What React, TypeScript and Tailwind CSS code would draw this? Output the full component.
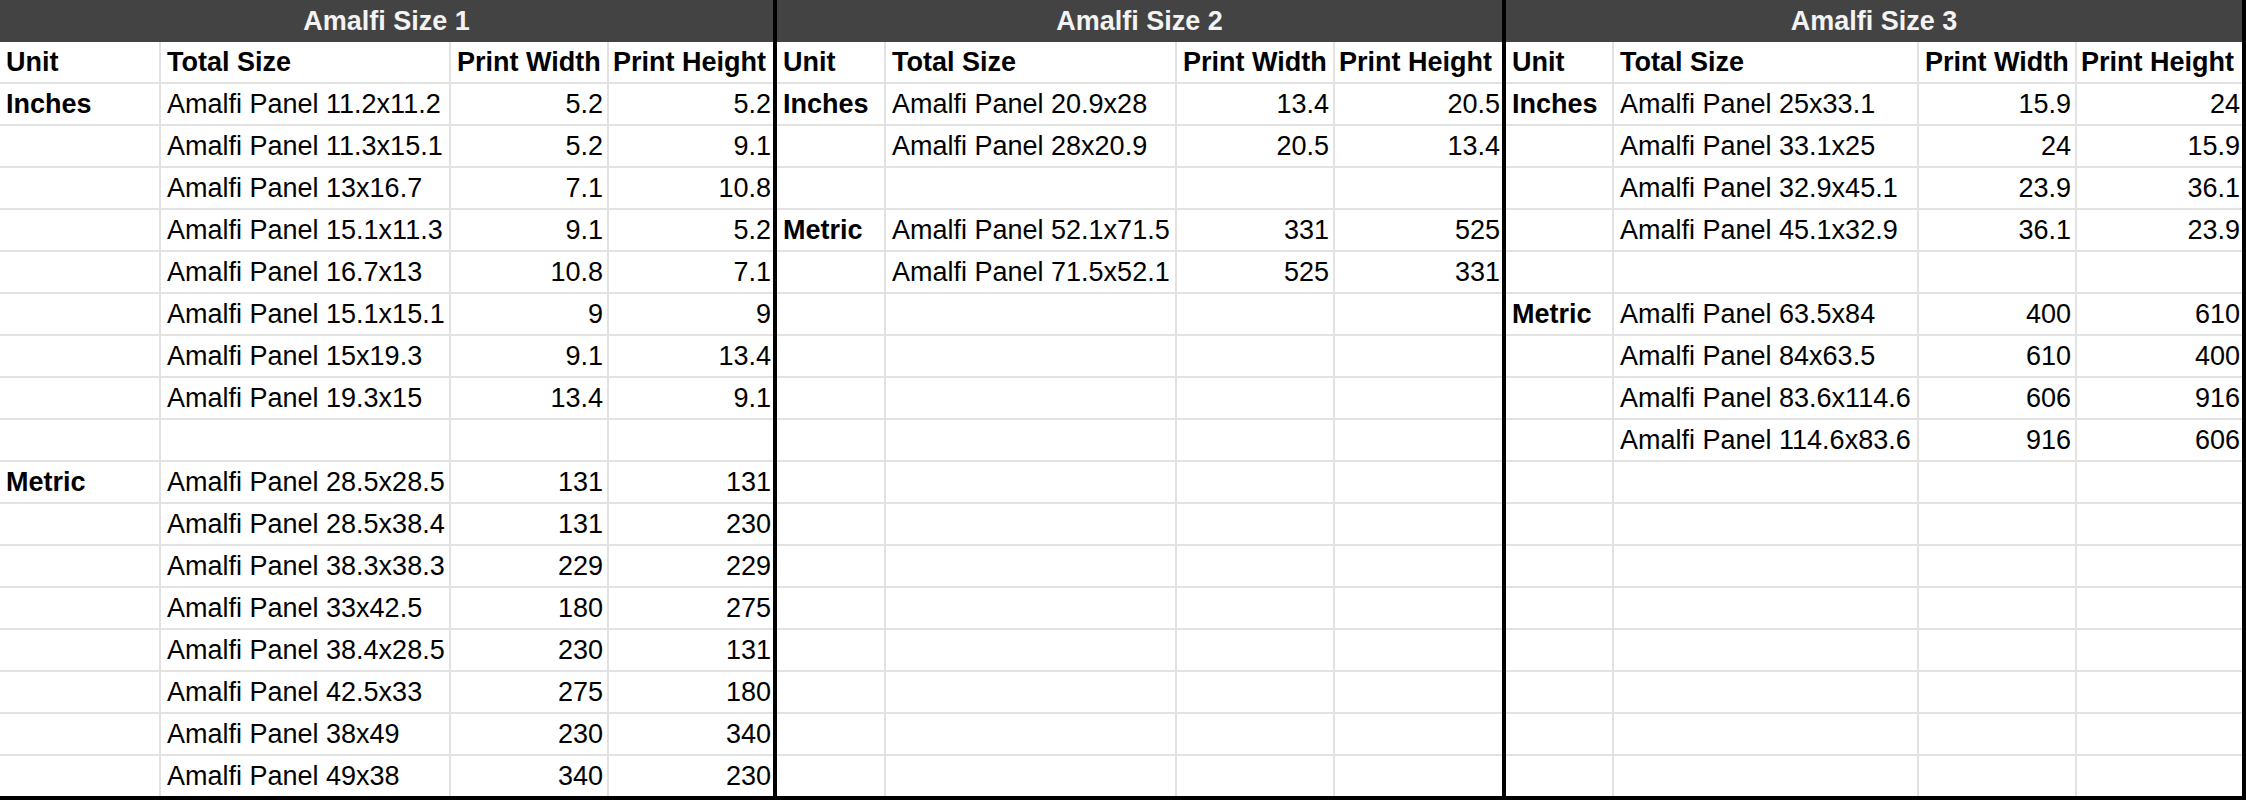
type Row = [string, string, string, string]

const blank: Row = ["", "", "", ""]

const size1: Row[] = [
  ["Inches", "Amalfi Panel 11.2x11.2", "5.2", "5.2"],
  ["", "Amalfi Panel 11.3x15.1", "5.2", "9.1"],
  ["", "Amalfi Panel 13x16.7", "7.1", "10.8"],
  ["", "Amalfi Panel 15.1x11.3", "9.1", "5.2"],
  ["", "Amalfi Panel 16.7x13", "10.8", "7.1"],
  ["", "Amalfi Panel 15.1x15.1", "9", "9"],
  ["", "Amalfi Panel 15x19.3", "9.1", "13.4"],
  ["", "Amalfi Panel 19.3x15", "13.4", "9.1"],
  blank,
  ["Metric", "Amalfi Panel 28.5x28.5", "131", "131"],
  ["", "Amalfi Panel 28.5x38.4", "131", "230"],
  ["", "Amalfi Panel 38.3x38.3", "229", "229"],
  ["", "Amalfi Panel 33x42.5", "180", "275"],
  ["", "Amalfi Panel 38.4x28.5", "230", "131"],
  ["", "Amalfi Panel 42.5x33", "275", "180"],
  ["", "Amalfi Panel 38x49", "230", "340"],
  ["", "Amalfi Panel 49x38", "340", "230"],
]

const size2: Row[] = [
  ["Inches", "Amalfi Panel 20.9x28", "13.4", "20.5"],
  ["", "Amalfi Panel 28x20.9", "20.5", "13.4"],
  blank,
  ["Metric", "Amalfi Panel 52.1x71.5", "331", "525"],
  ["", "Amalfi Panel 71.5x52.1", "525", "331"],
  ...Array.from({ length: 12 }, () => blank),
]

const size3: Row[] = [
  ["Inches", "Amalfi Panel 25x33.1", "15.9", "24"],
  ["", "Amalfi Panel 33.1x25", "24", "15.9"],
  ["", "Amalfi Panel 32.9x45.1", "23.9", "36.1"],
  ["", "Amalfi Panel 45.1x32.9", "36.1", "23.9"],
  blank,
  ["Metric", "Amalfi Panel 63.5x84", "400", "610"],
  ["", "Amalfi Panel 84x63.5", "610", "400"],
  ["", "Amalfi Panel 83.6x114.6", "606", "916"],
  ["", "Amalfi Panel 114.6x83.6", "916", "606"],
  ...Array.from({ length: 8 }, () => blank),
]

const Section = ({ title, rows, cols }: { title: string; rows: Row[]; cols: string }) => {
  return (
    <div className="flex flex-col border-r-4 border-black">
      <div className="h-[42px] bg-[#434343] text-[#f3f3f3] font-bold text-[27px] flex items-center justify-center">
        {title}
      </div>
      <div className={`grid ${cols} h-[42px] border-b-2 border-[#e2e2e2] font-bold`}>
        <div className="border-r-2 border-[#e2e2e2] pl-[6px] flex items-center">Unit</div>
        <div className="border-r-2 border-[#e2e2e2] pl-[6px] flex items-center">Total Size</div>
        <div className="border-r-2 border-[#e2e2e2] pl-[6px] flex items-center">Print Width</div>
        <div className="pl-[4px] flex items-center">Print Height</div>
      </div>
      {rows.map((r, i) => (
        <div
          key={i}
          className={`grid ${cols} ${i === rows.length - 1 ? "h-[44px] border-b-4 border-black" : "h-[42px] border-b-2 border-[#e2e2e2]"}`}
        >
          <div className="border-r-2 border-[#e2e2e2] pl-[6px] flex items-center font-bold">{r[0]}</div>
          <div className="border-r-2 border-[#e2e2e2] pl-[6px] flex items-center">{r[1]}</div>
          <div className="border-r-2 border-[#e2e2e2] pr-[4px] flex items-center justify-end">{r[2]}</div>
          <div className="pr-[2px] flex items-center justify-end">{r[3]}</div>
        </div>
      ))}
    </div>
  )
}

export default function App() {
  return (
    <div className="w-[2246px] h-[800px] overflow-hidden bg-white text-black text-[27px] leading-none [font-family:'Liberation_Sans',Arial,sans-serif]">
      <div className="flex">
        <Section title="Amalfi Size 1" rows={size1} cols="grid-cols-[161px_290px_158px_164px]" />
        <Section title="Amalfi Size 2" rows={size2} cols="grid-cols-[109px_291px_158px_167px]" />
        <Section title="Amalfi Size 3" rows={size3} cols="grid-cols-[108px_305px_158px_165px]" />
      </div>
    </div>
  )
}
